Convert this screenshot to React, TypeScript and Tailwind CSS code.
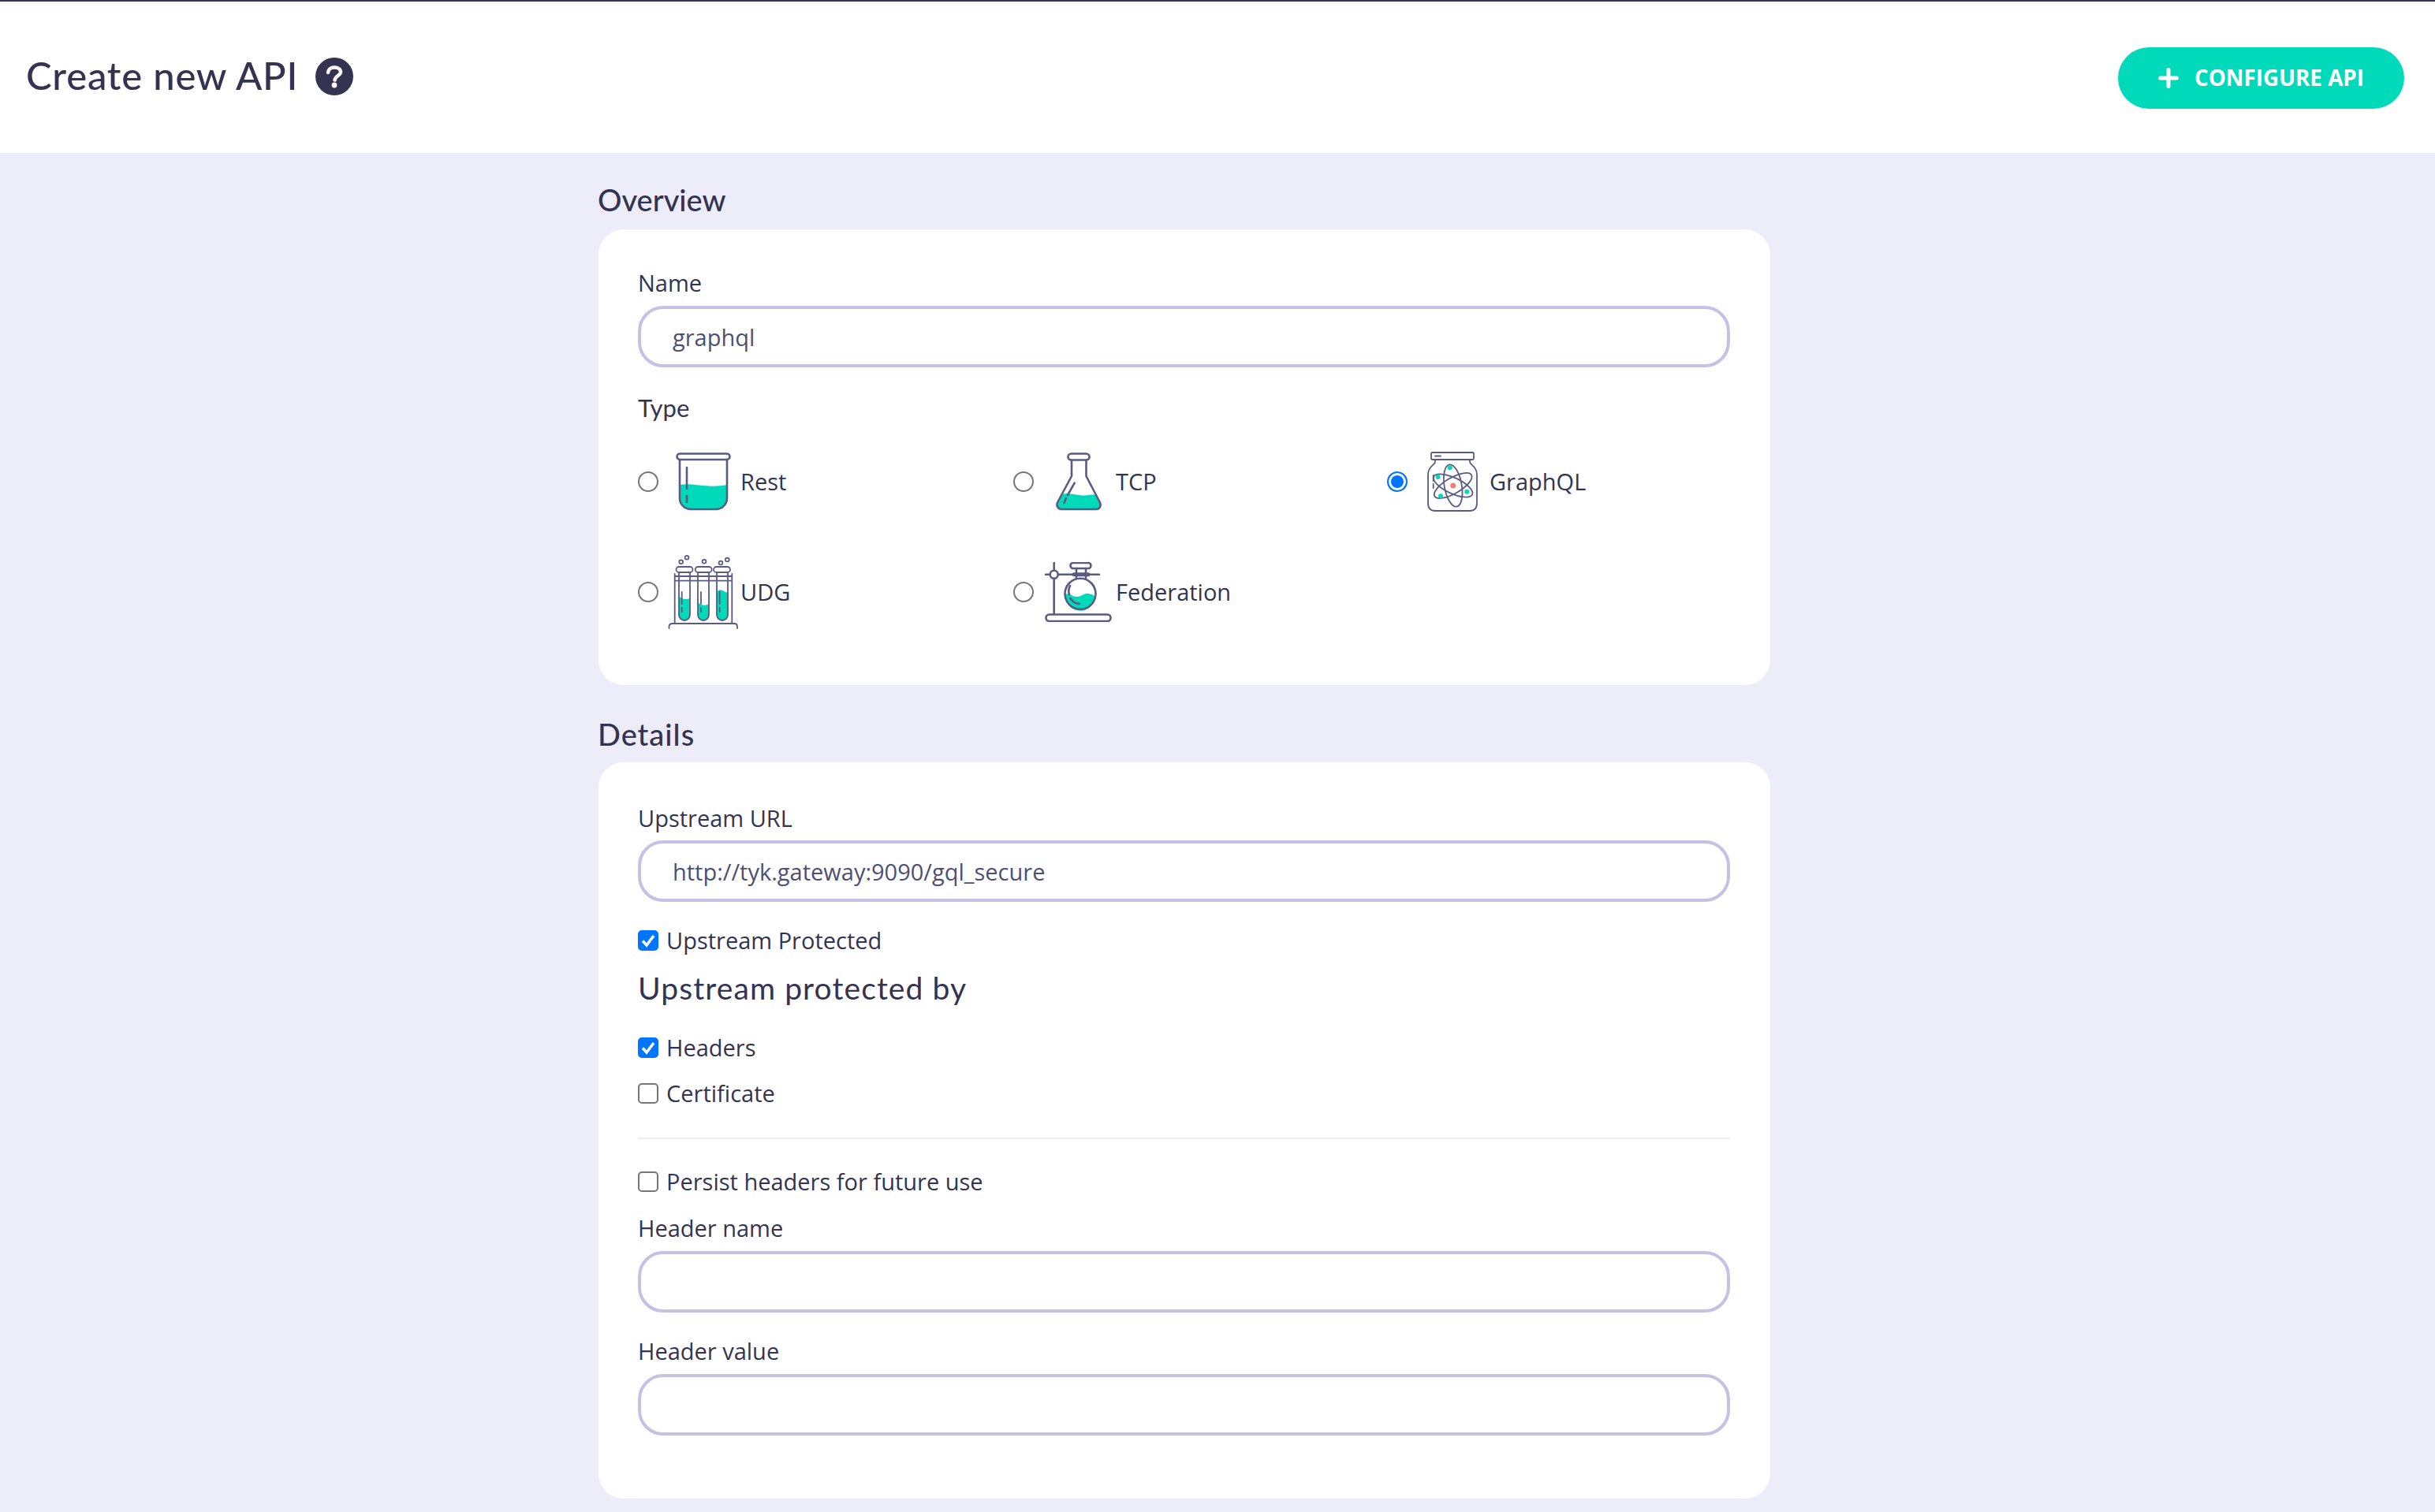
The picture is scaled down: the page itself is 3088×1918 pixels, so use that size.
import type { ReactNode } from "react";

const ink = "#5a5b80";
const teal = "#00dabb";

function RestIcon() {
  return (
    <svg width="70" height="74" viewBox="0 0 70 74" fill="none" stroke={ink} strokeWidth="2.6" strokeLinecap="round">
      <path d="M5 41C15 39 25 41 35 42S55 43 65 41V58a14 14 0 0 1-14 14H19A14 14 0 0 1 5 58Z" fill={teal} stroke="none" />
      <rect x="1.5" y="1.5" width="67" height="7.5" rx="3.7" />
      <path d="M5 9V58a14 14 0 0 0 14 14H51a14 14 0 0 0 14-14V9" />
      <path d="M14 19V46M14 55V63" />
    </svg>
  );
}

function TcpIcon() {
  return (
    <svg width="60" height="74" viewBox="0 0 60 74" fill="none" stroke={ink} strokeWidth="2.6" strokeLinecap="round" strokeLinejoin="round">
      <path d="M9 53C18 50 28 55 36 54.500C42 54 47 53.500 52 53L56.500 62.500C59 67 57 72 52 72H8C3.500 72 1 67 3.500 62.500Z" fill={teal} stroke="none" />
      <rect x="16.500" y="1.500" width="27" height="8" rx="4" />
      <path d="M21 10V30L3.500 62.500C1 67 3.500 72 8 72H52C57 72 59 67 56.500 62.500L39.500 30V10" />
      <path d="M24.700 38.700L16 54M14 58L11.600 63.700" />
    </svg>
  );
}

function GraphqlIcon() {
  return (
    <svg width="66" height="76" viewBox="0 0 66 76" fill="none" stroke={ink} strokeWidth="1.800" strokeLinecap="round" strokeLinejoin="round">
      <rect x="6" y="1" width="54" height="9" rx="1.500" />
      <path d="M11 5.500H18" />
      <path d="M11 10V13C11 17 2 18 2 29V65C2 71 5 75 11 75H55C61 75 64 71 64 65V29C64 18 55 17 55 13V10" />
      <path d="M8.700 30V37M8.700 41V46" />
      <ellipse cx="33.700" cy="43" rx="11" ry="27" transform="rotate(-10 33.700 43)" />
      <ellipse cx="33.700" cy="43" rx="27" ry="10" transform="rotate(25 33.700 43)" />
      <ellipse cx="33.700" cy="43" rx="27" ry="10" transform="rotate(-30 33.700 43)" />
      <circle cx="33.700" cy="43" r="3.500" fill="#f47c7c" stroke="none" />
      <circle cx="29.700" cy="20.300" r="3" fill={teal} stroke="none" />
      <circle cx="14.700" cy="32" r="3" fill={teal} stroke="none" />
      <circle cx="51.300" cy="50.700" r="3" fill={teal} stroke="none" />
      <circle cx="18" cy="56.300" r="3" fill={teal} stroke="none" />
    </svg>
  );
}

function UdgIcon() {
  return (
    <svg width="89" height="94" viewBox="0 0 89 94" fill="none" stroke={ink} strokeWidth="1.800" strokeLinecap="round" strokeLinejoin="round">
      <path d="M14 52C18 56 22 57 28 55V76a7 7 0 0 1-14 0Z" fill={teal} stroke="none" />
      <path d="M38 60C42 64 47 65 52 62V76a7 7 0 0 1-14 0Z" fill={teal} stroke="none" />
      <path d="M62 47C66 41 70 46 76 48V76a7 7 0 0 1-14 0Z" fill={teal} stroke="none" />
      <circle cx="16.700" cy="8.700" r="2.400" />
      <circle cx="24" cy="3.300" r="2.400" />
      <circle cx="46" cy="8.300" r="2.400" />
      <circle cx="67" cy="10" r="2.400" />
      <circle cx="75.300" cy="6" r="2.400" />
      <rect x="10.500" y="15" width="21" height="7" rx="3.500" />
      <rect x="34.700" y="15" width="21" height="7" rx="3.500" />
      <rect x="58" y="15" width="21" height="7" rx="3.500" />
      <path d="M14 22V76a7 7 0 0 0 14 0V22" />
      <path d="M38 22V76a7 7 0 0 0 14 0V22" />
      <path d="M62 22V76a7 7 0 0 0 14 0V22" />
      <path d="M8.700 24V86M81.300 24V86M8.700 27H81.300M8.700 32.700H81.300" />
      <path d="M17.700 47V62M17.700 67V72M42 47V62M42 67V72M65.700 47V62M65.700 67V72" />
      <path d="M1.500 93V91C1.500 88.500 3.500 87 6 87H84C86.500 87 88 88.500 88 91V93" />
    </svg>
  );
}

function FederationIcon() {
  return (
    <svg width="85" height="76" viewBox="0 0 85 76" fill="none" stroke={ink} strokeWidth="2.600" strokeLinecap="round" strokeLinejoin="round">
      <path d="M25.500 41C31 38 35 44 41 44C47 44 50 39 55 40C65 42 64 44 63.500 47A19 19 0 0 1 26 43Z" fill={teal} stroke="none" />
      <rect x="32.500" y="1" width="26" height="7" rx="3.500" />
      <path d="M40 8V21M52 8V21" />
      <circle cx="45" cy="40.300" r="19.500" />
      <path d="M11.700 1V10M11.700 21V66M1 15.700H6.500M17 15.700H69" />
      <circle cx="11.700" cy="15.700" r="5" />
      <path d="M37 15.700H55" strokeWidth="5" />
      <rect x="1.500" y="66.500" width="82" height="8.500" rx="4.200" />
      <path d="M32 30A14 14 0 0 0 31 41M32.500 46A14 14 0 0 0 44 53" />
    </svg>
  );
}

function FieldLabel({ children, className = "" }: { children: ReactNode; className?: string }) {
  return <div className={`h-[38px] text-[29px] leading-[38px] font-medium text-[#33344f] ${className}`}>{children}</div>;
}

function TextField({ value = "", className = "" }: { value?: string; className?: string }) {
  return (
    <input
      readOnly
      value={value}
      className={`block w-full h-[78px] px-[40px] rounded-[32px] border-4 border-[#c4c1e4] bg-white text-[29px] font-medium text-[#4e4f75] outline-none ${className}`}
    />
  );
}

function Check({ label, checked = false, className = "" }: { label: string; checked?: boolean; className?: string }) {
  return (
    <label className={`flex items-center gap-[10px] h-[38px] text-[29px] font-medium text-[#33344f] ${className}`}>
      <span className="relative w-[26px] h-[26px]">
        <input
          type="checkbox"
          readOnly
          checked={checked}
          className="block appearance-none w-[26px] h-[26px] m-0 rounded-[5px] border-2 border-[#767676] bg-white checked:border-[#0075ff] checked:bg-[#0075ff]"
        />
        {checked && (
          <svg width="26" height="26" viewBox="0 0 26 26" className="absolute inset-0">
            <path d="M6 13.500L11 19L20 7" fill="none" stroke="#fff" strokeWidth="3.600" />
          </svg>
        )}
      </span>
      {label}
    </label>
  );
}

function TypeOption({ label, icon, checked = false }: { label: string; icon: ReactNode; checked?: boolean }) {
  return (
    <label className="flex items-center h-[80px] text-[29px] font-medium text-[#33344f]">
      <input
        type="radio"
        name="api-type"
        readOnly
        checked={checked}
        className="block appearance-none w-[26px] h-[26px] m-0 rounded-full border-2 border-[#767676] bg-white checked:border-[#0075ff] checked:bg-[#0075ff] checked:shadow-[inset_0_0_0_3px_white]"
      />
      <span className="flex justify-center items-center w-[95px] ml-[9px]">{icon}</span>
      {label}
    </label>
  );
}

export default function App() {
  return (
    <div className="min-h-[1918px] bg-[#ecedf8] font-['Open_Sans',sans-serif]">
      <header className="h-[194px] flex items-center justify-between bg-white border-t-2 border-[#343452] pl-[33px] pr-[39px]">
        <div className="flex items-center gap-[22px]">
          <h1 className="-mt-[5px] font-['Lato',sans-serif] text-[49px] tracking-[0.8px] font-medium leading-none text-[#343452]">Create new API</h1>
          <svg width="48" height="48" viewBox="0 0 48 48" className="-mt-[2px]">
            <circle cx="24" cy="24" r="24" fill="#343452" />
            <path d="M16 19C16.500 14.500 20 12.500 24 12.500C28.500 12.500 32 14.500 32 18.500C32 22.500 25.500 23 24.500 28.500" fill="none" stroke="#fff" strokeWidth="4.500" strokeLinecap="round" />
            <circle cx="24" cy="35" r="3.400" fill="#fff" />
          </svg>
        </div>
        <button className="mt-[1px] flex items-center h-[78px] pl-[51px] pr-[51px] rounded-full bg-[#00dabb] text-white text-[27.800px] font-bold">
          <svg width="26" height="26" viewBox="0 0 26 26" className="mr-[20px]">
            <path d="M13 2.500V23.500M2.500 13H23.500" stroke="#fff" strokeWidth="5" strokeLinecap="round" />
          </svg>
          CONFIGURE API
        </button>
      </header>

      <main className="ml-[759px] w-[1486px] pt-[34px] pb-[18px]">
        <h2 className="h-[50px] -ml-px font-['Lato',sans-serif] text-[38px] leading-[50px] font-medium text-[#343452]">Overview</h2>
        <section className="mt-[13px] rounded-[32px] bg-white pl-[50px] pr-[51px] pt-[49px] pb-[78px]">
          <FieldLabel>Name</FieldLabel>
          <TextField value="graphql" className="mt-[10px]" />
          <div className="mt-[32px] h-[38px] font-['Lato',sans-serif] text-[31px] leading-[38px] text-[#343452]">Type</div>
          <div className="mt-[35px] grid grid-cols-[476px_474px_1fr] gap-y-[60px]">
            <TypeOption label="Rest" icon={<RestIcon />} />
            <TypeOption label="TCP" icon={<TcpIcon />} />
            <TypeOption label="GraphQL" icon={<GraphqlIcon />} checked />
            <TypeOption label="UDG" icon={<UdgIcon />} />
            <TypeOption label="Federation" icon={<FederationIcon />} />
          </div>
        </section>

        <h2 className="mt-[37px] h-[50px] -ml-px font-['Lato',sans-serif] text-[38px] tracking-[1px] leading-[50px] font-medium text-[#343452]">Details</h2>
        <section className="mt-[11px] rounded-[32px] bg-white pl-[50px] pr-[51px] pt-[52px] pb-[80px]">
          <FieldLabel>Upstream URL</FieldLabel>
          <TextField value="http://tyk.gateway:9090/gql_secure" className="mt-[9px]" />
          <Check label="Upstream Protected" checked className="mt-[30px]" />
          <h3 className="mt-[16px] h-[50px] font-['Lato',sans-serif] text-[39px] tracking-[1.100px] leading-[50px] text-[#343452]">Upstream protected by</h3>
          <Check label="Headers" checked className="mt-[32px]" />
          <Check label="Certificate" className="mt-[20px]" />
          <div className="mt-[37px] h-[2px] bg-[#f0f0f2]" />
          <Check label="Persist headers for future use" className="mt-[35px]" />
          <FieldLabel className="mt-[21px]">Header name</FieldLabel>
          <TextField className="mt-[10px]" />
          <FieldLabel className="mt-[30px]">Header value</FieldLabel>
          <TextField className="mt-[10px]" />
        </section>
      </main>
    </div>
  );
}
